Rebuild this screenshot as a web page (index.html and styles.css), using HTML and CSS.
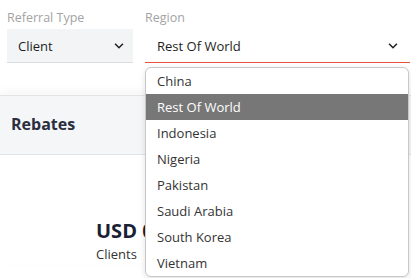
FILE: index.html
```html
<!DOCTYPE html>
<html lang="en">
<head>
    <meta charset="UTF-8">
    <meta name="viewport" content="width=device-width, initial-scale=1.0">
    <title>Rebates</title>
    <link rel="stylesheet" href="styles.css">
</head>
<body>
    <div class="filters">
        <div class="field field-type">
            <label class="label">Referral Type</label>
            <div class="select">
                <span>Client</span>
                <svg class="chevron" viewBox="0 0 16 16">
                    <path d="M3.5 5.5 8 10l4.5-4.5" />
                </svg>
            </div>
        </div>
        <div class="field field-region">
            <label class="label">Region</label>
            <div class="select active">
                <span>Rest Of World</span>
                <svg class="chevron" viewBox="0 0 16 16">
                    <path d="M3.5 5.5 8 10l4.5-4.5" />
                </svg>
            </div>
            <ul class="menu">
                <li>China</li>
                <li class="selected">Rest Of World</li>
                <li>Indonesia</li>
                <li>Nigeria</li>
                <li>Pakistan</li>
                <li>Saudi Arabia</li>
                <li>South Korea</li>
                <li>Vietnam</li>
            </ul>
        </div>
    </div>

    <div class="card">
        <div class="card-head">Rebates</div>
        <div class="card-body">
            <div class="amount">USD 0.00</div>
            <div class="caption">Clients</div>
        </div>
    </div>
</body>
</html>
```

FILE: styles.css
```css
html, body {
    height: 100%;
    overflow: hidden;
}

body {
    margin: 0;
    padding: 0;
    background: #fff;
    font-family: "Open Sans", "Noto Sans", sans-serif;
    color: #222;
}

.filters {
    display: flex;
    gap: 12px;
    padding: 9px 1px 0 7px;
    height: 56px;
}

.field {
    display: flex;
    flex-direction: column;
    gap: 3px;
}

.field-type {
    width: 126px;
}

.field-region {
    flex: 1;
    position: relative;
}

.label {
    font-size: 12.5px;
    color: #a3a3a3;
    line-height: 17px;
}

.select {
    display: flex;
    align-items: center;
    justify-content: space-between;
    height: 33px;
    padding: 0 7px 0 11px;
    background: #f3f4f6;
    border-bottom: 1px solid #dcdde0;
    font-size: 13px;
    color: #1e1e1e;
}

.select.active {
    background: #fff;
    border-bottom: 1.5px solid #e8513b;
    padding-left: 12px;
    padding-right: 10px;
}

.chevron {
    width: 14px;
    height: 14px;
    fill: none;
    stroke: #222;
    stroke-width: 1.8;
}

.menu {
    position: absolute;
    top: 58px;
    left: 0;
    right: 1px;
    margin: 0;
    padding: 0;
    list-style: none;
    background: #fff;
    border: 1px solid #c8c8c8;
    border-radius: 6px;
    box-shadow: 0 2px 6px rgba(0, 0, 0, 0.12);
    z-index: 2;
}

.menu li {
    height: 26px;
    line-height: 26px;
    padding-left: 11px;
    font-size: 13px;
    color: #333;
}

.menu li.selected {
    background: #777;
    color: #fff;
}

.card {
    margin-top: 30px;
    box-shadow: 0 -4px 10px rgba(0, 0, 0, 0.04);
}

.card-head {
    background: #f5f6f8;
    border-top: 1px solid #e2e3e7;
    border-bottom: 1px solid #e2e3e7;
    height: 60px;
    padding-left: 11px;
    padding-bottom: 3px;
    box-sizing: border-box;
    display: flex;
    align-items: center;
    font-size: 16px;
    font-weight: 700;
    color: #2a2e3e;
}

.card-body {
    padding: 63px 0 0 96px;
}

.amount {
    font-size: 20px;
    font-weight: 700;
    color: #1a1f36;
    line-height: 26px;
}

.caption {
    font-size: 13px;
    color: #333;
    margin-top: 1px;
}
```
